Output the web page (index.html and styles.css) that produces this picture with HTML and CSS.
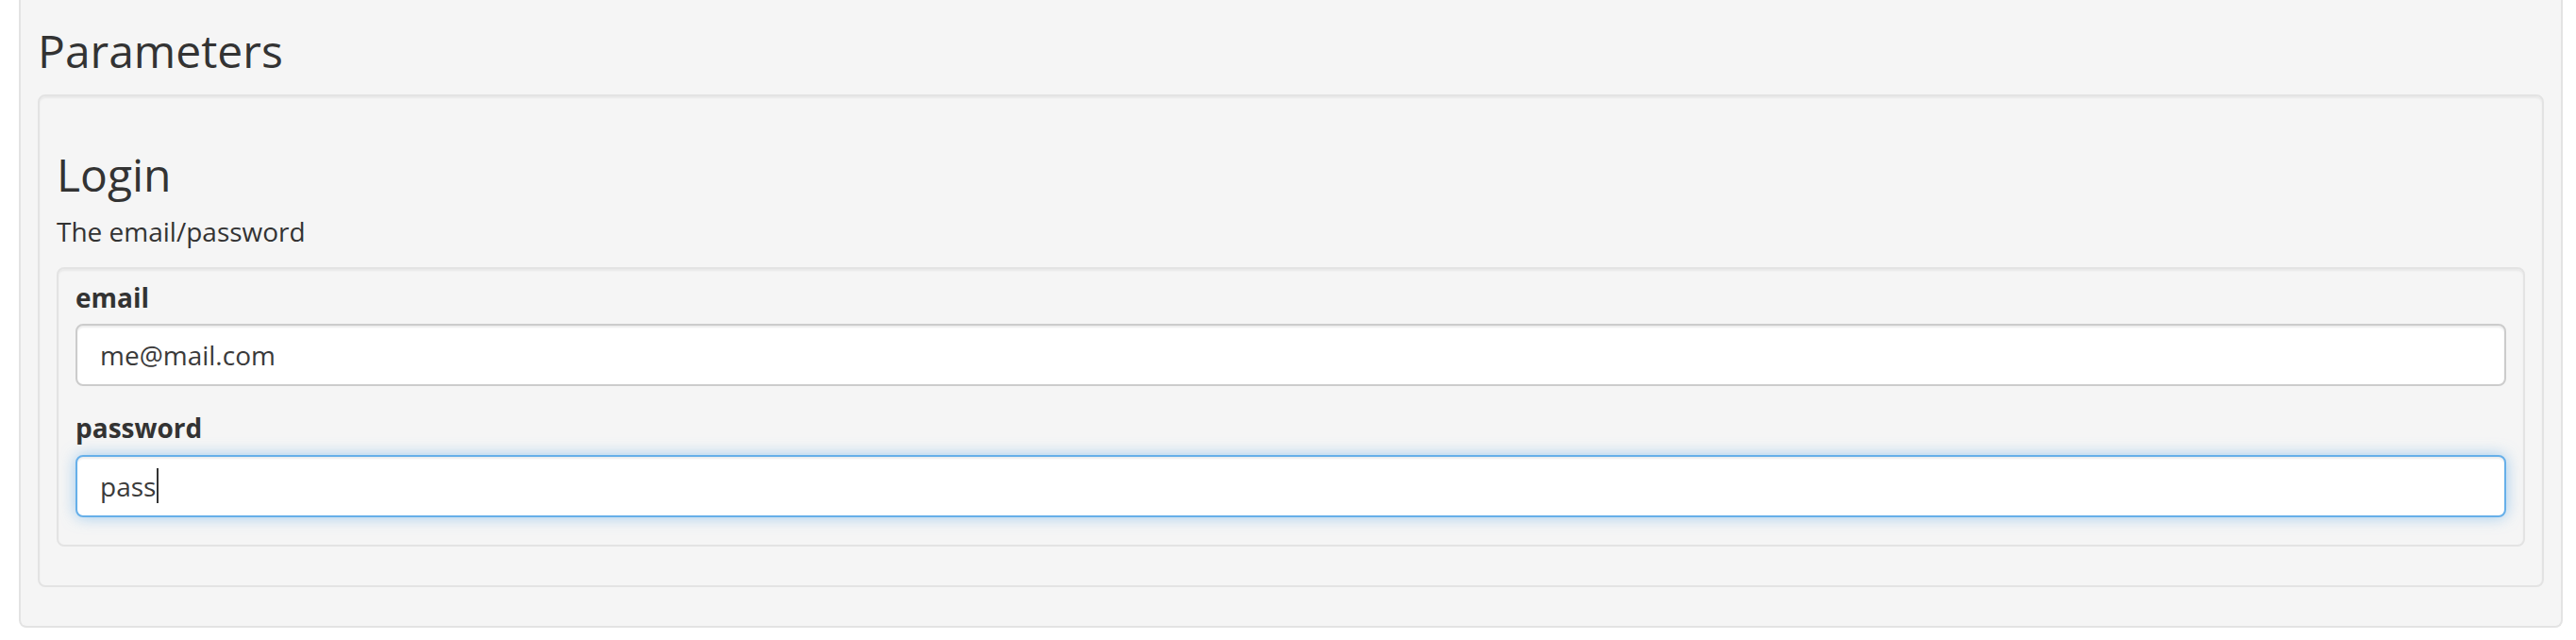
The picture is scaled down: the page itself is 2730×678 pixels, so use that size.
FILE: index.html
```html
<!DOCTYPE html>
<html lang="en">
<head>
<meta charset="utf-8">
<title>Parameters</title>
<link rel="stylesheet" href="styles.css">
</head>
<body>
<div class="panel outer">
  <h3 class="title">Parameters</h3>
  <div class="panel group">
    <h3 class="title login">Login</h3>
    <p class="desc">The email/password</p>
    <div class="panel fields">
      <label class="field-label" for="email">email</label>
      <input class="field-input" id="email" type="text" value="me@mail.com">
      <label class="field-label second" for="password">password</label>
      <div class="input-wrap">
        <input class="field-input focused" id="password" type="text" value="pass">
        <span class="caret"></span>
      </div>
    </div>
  </div>
</div>
</body>
</html>
```

FILE: styles.css
```css
* { box-sizing: border-box; }

html, body {
  margin: 0;
  padding: 0;
  background: #ffffff;
}

body {
  padding: 0 14px 0 20px;
  font-family: "Open Sans", "Liberation Sans", sans-serif;
  color: #333333;
  font-size: 28px;
  line-height: 40px;
}

.panel {
  background: #f5f5f5;
  border: 2px solid #e3e3e3;
  border-radius: 8px;
  box-shadow: inset 0 2px 2px rgba(0, 0, 0, 0.05);
}

.outer {
  border-top: none;
  border-top-left-radius: 0;
  border-top-right-radius: 0;
  box-shadow: none;
  padding: 27px 18px 41px 18px;
}

.title {
  margin: 0;
  font-size: 48px;
  font-weight: 400;
  line-height: 53px;
  color: #333333;
}

.group {
  margin-top: 20px;
  padding: 56px 18px 41px 18px;
}

.desc {
  margin: 14px 0 0 0;
  font-size: 28px;
  line-height: 40px;
}

.fields {
  margin-top: 18px;
  padding: 10px 18px 29px 18px;
  display: flex;
  flex-direction: column;
}

.field-label {
  display: block;
  font-weight: 700;
  font-size: 28px;
  line-height: 40px;
  margin-bottom: 8px;
}

.field-label.second {
  margin-top: 24px;
  margin-bottom: 9px;
}

.input-wrap {
  position: relative;
}

.field-input {
  display: block;
  width: 100%;
  height: 66px;
  margin: 0;
  padding: 0 24px;
  font-family: "Open Sans", "Liberation Sans", sans-serif;
  font-size: 28px;
  color: #3a3a3a;
  background: #ffffff;
  border: 2px solid #cccccc;
  border-radius: 8px;
  box-shadow: inset 0 2px 2px rgba(0, 0, 0, 0.075);
  outline: none;
}

.field-input.focused {
  border-color: #66afe9;
  box-shadow: inset 0 2px 2px rgba(0, 0, 0, 0.075), 0 0 16px rgba(102, 175, 233, 0.6);
}

.caret {
  position: absolute;
  left: 86px;
  top: 14px;
  width: 2px;
  height: 37px;
  background: #333333;
}
```
